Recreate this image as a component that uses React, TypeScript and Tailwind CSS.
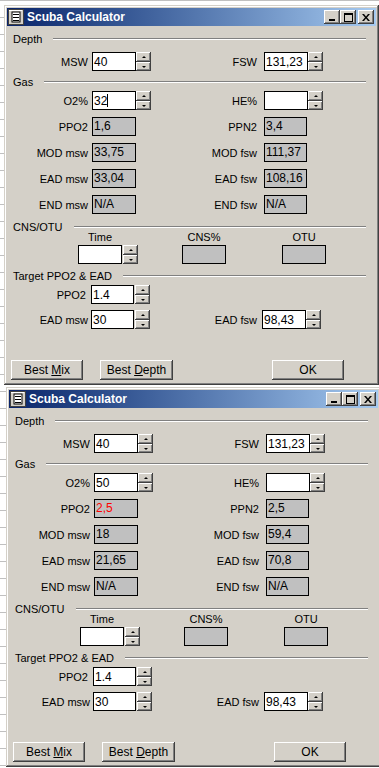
import React from "react";

// classic win2k bevels
const raised =
  "shadow-[inset_-1px_-1px_#404040,inset_1px_1px_#ffffff,inset_-2px_-2px_#808080,inset_2px_2px_#d4d0c8]";
const frame =
  "shadow-[inset_-1px_-1px_#404040,inset_1px_1px_#d4d0c8,inset_-2px_-2px_#808080,inset_2px_2px_#ffffff]";

type Data = {
  o2: string;
  caret?: boolean;
  ppo2: string;
  ppo2Red?: boolean;
  ppn2: string;
  modm: string;
  modf: string;
  eadm: string;
  eadf: string;
};

const Spin = ({ gap = false }: { gap?: boolean }) => (
  <div className={"flex flex-col w-[15px] h-[19px] " + (gap ? "ml-[1px]" : "")}>
    <div className={"h-[10px] bg-[#d4d0c8] flex items-center justify-center " + raised}>
      <div className="w-0 h-0 border-x-[2px] border-x-transparent border-b-[2px] border-b-black" />
    </div>
    <div className={"h-[9px] bg-[#d4d0c8] flex items-center justify-center " + raised}>
      <div className="w-0 h-0 border-x-[2px] border-x-transparent border-t-[2px] border-t-black" />
    </div>
  </div>
);

const Edit = ({ value, caret, w = "w-[44px]" }: { value: string; caret?: boolean; w?: string }) => (
  <div className={"h-[19px] bg-white border border-black flex items-center pl-[1px] text-[12px] leading-none " + w}>
    <span>{value}</span>
    {caret && <span className="w-[1px] h-[13px] bg-black" />}
  </div>
);

const Box = ({ value, red, w = "w-[44px]" }: { value: string; red?: boolean; w?: string }) => (
  <div
    className={
      "h-[19px] bg-[#c0c0c0] border border-black pl-[1px] pt-[2px] text-[12px] leading-none " +
      w +
      (red ? " text-[#ff0000]" : "")
    }
  >
    {value}
  </div>
);

const Heading = ({ label, cls }: { label: string; cls: string }) => (
  <div className={"flex items-center h-[14px] pl-[6px] pr-[10px] " + cls}>
    <span>{label}</span>
    <div className="ml-[11px] flex-1 h-[2px] border-t border-b border-t-[#808080] border-b-white" />
  </div>
);

const Btn = ({ children, w, cls = "" }: { children: React.ReactNode; w: string; cls?: string }) => (
  <div className={"h-[20px] bg-[#d4d0c8] flex items-center justify-center text-[12px] " + w + " " + raised + " " + cls}>
    {children}
  </div>
);

const CapBtn = ({ children }: { children: React.ReactNode }) => (
  <div className={"w-[16px] h-[14px] bg-[#d4d0c8] flex items-center justify-center " + raised}>{children}</div>
);

function Win({ d, cls }: { d: Data; cls: string }) {
  return (
    <div className={"w-[375px] h-[380px] bg-[#d4d0c8] p-[3px] flex flex-col text-black " + frame + " " + cls}>
      {/* title */}
      <div className="h-[18px] shrink-0 bg-linear-to-r from-[#0a246a] to-[#a6caf0] flex items-center pr-[2px]">
        <svg width="16" height="16" viewBox="0 0 16 16" className="ml-[1px]">
          <rect x="0.5" y="0.5" width="15" height="15" fill="#d4d0c8" stroke="#404040" />
          <rect x="1" y="1" width="13" height="1" fill="#ffffff" />
          <rect x="4" y="3" width="8" height="10" fill="#ffffff" stroke="#000" strokeWidth="1" />
          <rect x="5" y="5" width="6" height="1" fill="#000" />
          <rect x="5" y="8" width="6" height="1" fill="#000" />
          <rect x="5" y="11" width="6" height="1" fill="#000" />
        </svg>
        <span className="ml-[3px] text-white font-bold text-[12px] leading-none">Scuba Calculator</span>
        <div className="ml-auto flex">
          <CapBtn>
            <svg width="8" height="8" viewBox="0 0 8 8">
              <rect x="1" y="6" width="6" height="2" fill="#000" />
            </svg>
          </CapBtn>
          <CapBtn>
            <svg width="9" height="9" viewBox="0 0 9 9">
              <rect x="0.5" y="0.5" width="8" height="8" fill="none" stroke="#000" />
              <rect x="0" y="1" width="9" height="1" fill="#000" />
            </svg>
          </CapBtn>
          <div className="w-[2px]" />
          <CapBtn>
            <svg width="8" height="7" viewBox="0 0 8 7">
              <path d="M0 0h2l2 2.5 2-2.5h2L5 3.5 8 7H6L4 4.5 2 7H0l3-3.5z" fill="#000" />
            </svg>
          </CapBtn>
        </div>
      </div>

      <div className="flex flex-col text-[11px] leading-[14px]">
        <Heading label="Depth" cls="mt-[6px]" />
        <div className="flex items-center mt-[6px]">
          <div className="w-[85px] pr-[4px] text-right">MSW</div>
          <Edit value="40" />
          <Spin />
          <div className="w-[113px] pr-[7px] text-right">FSW</div>
          <Edit value="131,23" />
          <Spin />
        </div>

        <Heading label="Gas" cls="mt-[4px]" />
        <div className="flex items-center mt-[2px]">
          <div className="w-[85px] pr-[4px] text-right">O2%</div>
          <Edit value={d.o2} caret={d.caret} />
          <Spin />
          <div className="w-[113px] pr-[7px] text-right">HE%</div>
          <Edit value="" />
          <Spin />
        </div>
        {[
          ["PPO2", d.ppo2, "PPN2", d.ppn2],
          ["MOD msw", d.modm, "MOD fsw", d.modf],
          ["EAD msw", d.eadm, "EAD fsw", d.eadf],
          ["END msw", "N/A", "END fsw", "N/A"],
        ].map(([l, v, r, rv], i) => (
          <div key={l} className="flex items-center mt-[7px]">
            <div className="w-[85px] pr-[4px] text-right">{l}</div>
            <Box value={v} red={i === 0 && d.ppo2Red} />
            <div className="w-[128px] pr-[7px] text-right">{r}</div>
            <Box value={rv} w="w-[43px]" />
          </div>
        ))}

        <Heading label="CNS/OTU" cls="mt-[6px]" />
        <div className="flex h-[14px] -mt-[4px] pl-[71px]">
          <div className="w-[44px] text-center">Time</div>
          <div className="ml-[60px] w-[44px] text-center">CNS%</div>
          <div className="ml-[56px] w-[44px] text-center">OTU</div>
        </div>
        <div className="flex mt-[1px] pl-[71px]">
          <Edit value="" />
          <Spin gap />
          <div className="ml-[44px]">
            <Box value="" />
          </div>
          <div className="ml-[56px]">
            <Box value="" />
          </div>
        </div>

        <Heading label="Target PPO2 & EAD" cls="mt-[5px]" />
        <div className="flex items-center mt-[2px]">
          <div className="w-[84px] pr-[5px] text-right">PPO2</div>
          <Edit value="1.4" w="w-[43px]" />
          <Spin gap />
        </div>
        <div className="flex items-center mt-[6px]">
          <div className="w-[84px] pr-[3px] text-right">EAD msw</div>
          <Edit value="30" w="w-[43px]" />
          <Spin gap />
          <div className="w-[112px] pr-[5px] text-right">EAD fsw</div>
          <Edit value="98,43" />
          <Spin />
        </div>

        <div className="flex mt-[31px] pl-[4px]">
          <Btn w="w-[72px]">
            Best&nbsp;<span className="underline">M</span>ix
          </Btn>
          <Btn w="w-[73px]" cls="ml-[17px]">
            Best&nbsp;<span className="underline">D</span>epth
          </Btn>
          <Btn w="w-[72px]" cls="ml-[99px]">
            OK
          </Btn>
        </div>
      </div>
    </div>
  );
}

export default function App() {
  const w1: Data = {
    o2: "32",
    caret: true,
    ppo2: "1,6",
    ppn2: "3,4",
    modm: "33,75",
    modf: "111,37",
    eadm: "33,04",
    eadf: "108,16",
  };
  const w2: Data = {
    o2: "50",
    ppo2: "2,5",
    ppo2Red: true,
    ppn2: "2,5",
    modm: "18",
    modf: "59,4",
    eadm: "21,65",
    eadf: "70,8",
  };
  return (
    <div
      className="w-[379px] h-[768px] overflow-hidden bg-white pt-[5px] bg-[linear-gradient(#c0c0c0_1px,transparent_1px)] bg-[length:100%_17px]"
      style={{ fontFamily: '"Liberation Sans", Arial, sans-serif' }}
    >
      <Win d={w1} cls="ml-[4px]" />
      <Win d={w2} cls="ml-[6px] mt-[2px]" />
    </div>
  );
}
